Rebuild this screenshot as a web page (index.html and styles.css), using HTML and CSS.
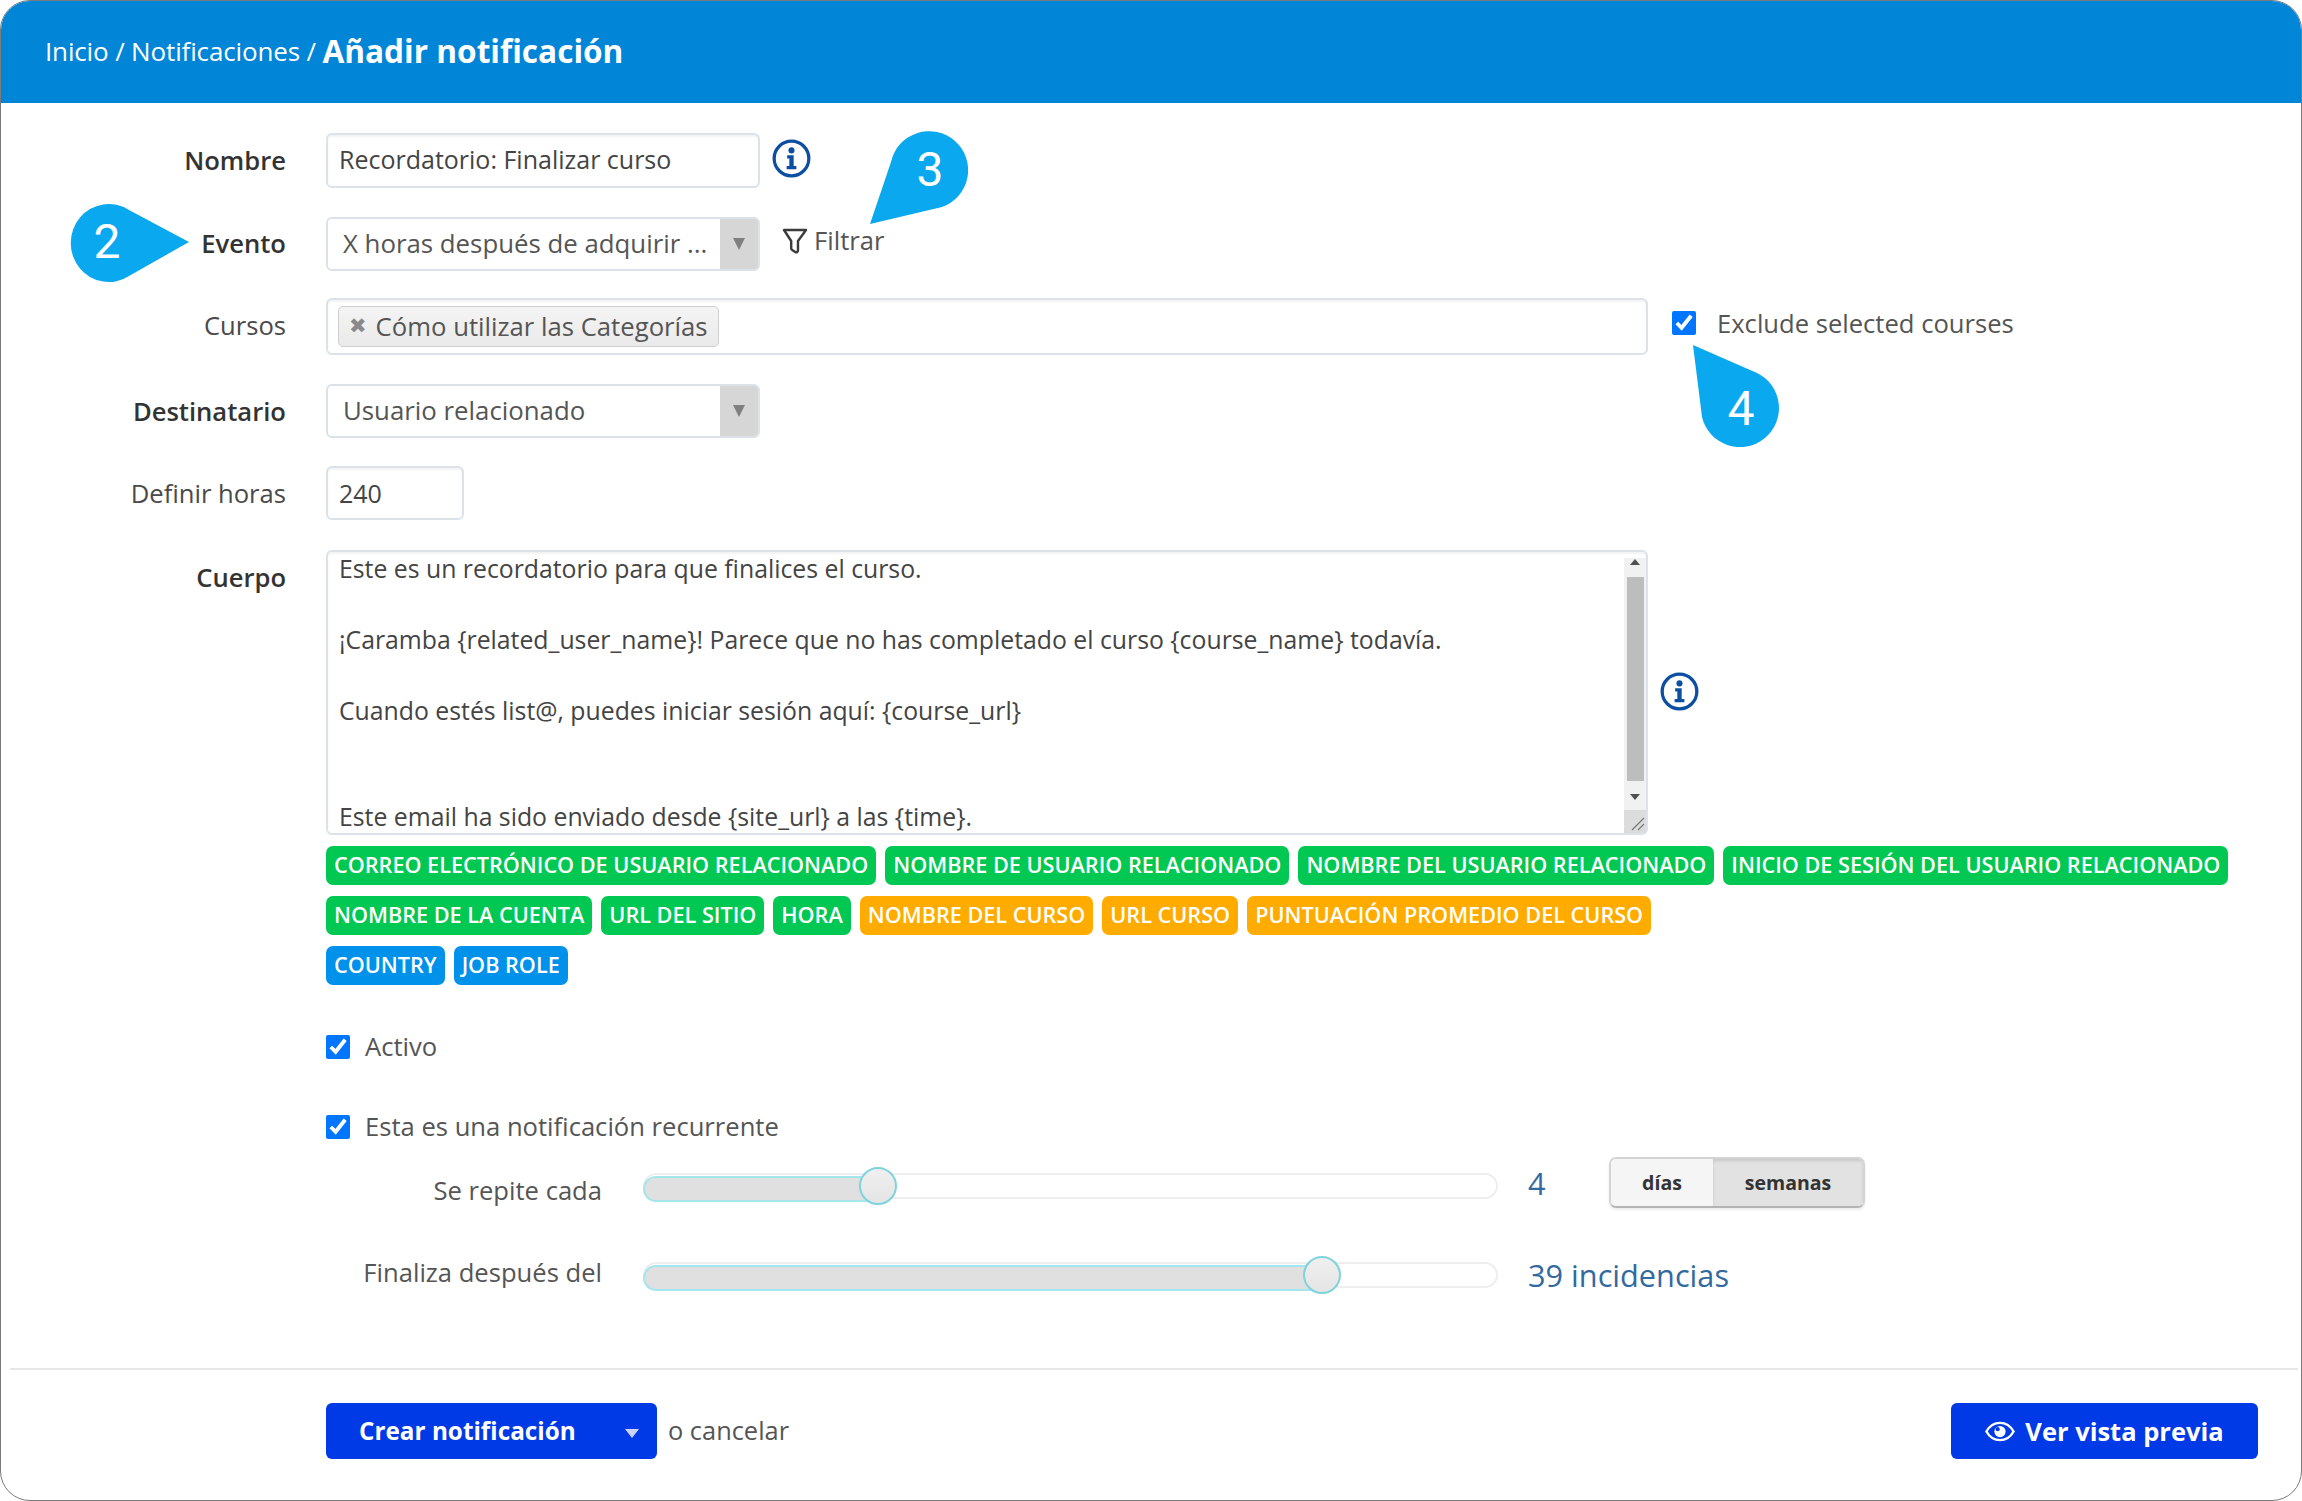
FILE: index.html
```html
<!DOCTYPE html>
<html lang="es">
<head>
<meta charset="utf-8">
<title>Añadir notificación</title>
<link rel="stylesheet" href="styles.css">
</head>
<body>
<div class="card">
  <header class="topbar">
    <span class="crumb">Inicio / Notificaciones / </span><strong class="crumb-current">Añadir notificación</strong>
  </header>

  <main class="form">
    <div class="row row-name">
      <label class="label strong">Nombre</label>
      <div class="input input-name">Recordatorio: Finalizar curso</div>
      <svg class="info info-name" viewBox="0 0 36 36"><circle cx="18" cy="18" r="16" fill="none" stroke="#0b4ea2" stroke-width="3"/><circle cx="18" cy="10.5" r="2.8" fill="#0b4ea2"/><path d="M14 15h6v10h2.5v3h-9v-3H16v-7h-2z" fill="#0b4ea2"/></svg>
    </div>

    <div class="row row-event">
      <label class="label strong">Evento</label>
      <div class="select"><span class="select-text">X horas después de adquirir ...</span><span class="select-arrow"><i class="tri"></i></span></div>
      <div class="filter">
        <svg class="filter-icon" viewBox="0 0 26 26"><path d="M2 2h22l-8 11v9.5a1.8 1.8 0 0 1-2.8 1.5l-3-2a2 2 0 0 1-1-1.6V13z" fill="none" stroke="#3b3b3b" stroke-width="2.4" stroke-linejoin="round"/></svg>
        <span>Filtrar</span>
      </div>
    </div>

    <div class="row row-courses">
      <label class="label">Cursos</label>
      <div class="input multi"><span class="chip"><b class="chip-x">✖</b>Cómo utilizar las Categorías</span></div>
      <label class="check check-exclude"><input type="checkbox" checked><span>Exclude selected courses</span></label>
    </div>

    <div class="row row-target">
      <label class="label strong">Destinatario</label>
      <div class="select"><span class="select-text">Usuario relacionado</span><span class="select-arrow"><i class="tri"></i></span></div>
    </div>

    <div class="row row-hours">
      <label class="label">Definir horas</label>
      <div class="input input-hours">240</div>
    </div>

    <div class="row row-body">
      <label class="label strong">Cuerpo</label>
      <div class="input body-area">
        <div class="body-text">Este es un recordatorio para que finalices el curso.

¡Caramba {related_user_name}! Parece que no has completado el curso {course_name} todavía.

Cuando estés list@, puedes iniciar sesión aquí: {course_url}


Este email ha sido enviado desde {site_url} a las {time}.</div>
        <div class="scrollbar">
          <i class="sb-up"></i>
          <div class="sb-thumb"></div>
          <i class="sb-down"></i>
          <div class="sb-corner"><svg viewBox="0 0 22 21" class="grip"><path d="M8 20 20 8M14 20l6-6" stroke="#777" stroke-width="1.2" fill="none"/></svg></div>
        </div>
      </div>
      <svg class="info info-body" viewBox="0 0 36 36"><circle cx="18" cy="18" r="16" fill="none" stroke="#0b4ea2" stroke-width="3"/><circle cx="18" cy="10.5" r="2.8" fill="#0b4ea2"/><path d="M14 15h6v10h2.5v3h-9v-3H16v-7h-2z" fill="#0b4ea2"/></svg>
    </div>

    <div class="tags">
      <div class="tag-row">
        <span class="tag green">CORREO ELECTRÓNICO DE USUARIO RELACIONADO</span>
        <span class="tag green">NOMBRE DE USUARIO RELACIONADO</span>
        <span class="tag green">NOMBRE DEL USUARIO RELACIONADO</span>
        <span class="tag green">INICIO DE SESIÓN DEL USUARIO RELACIONADO</span>
      </div>
      <div class="tag-row">
        <span class="tag green">NOMBRE DE LA CUENTA</span>
        <span class="tag green">URL DEL SITIO</span>
        <span class="tag green">HORA</span>
        <span class="tag orange">NOMBRE DEL CURSO</span>
        <span class="tag orange">URL CURSO</span>
        <span class="tag orange">PUNTUACIÓN PROMEDIO DEL CURSO</span>
      </div>
      <div class="tag-row">
        <span class="tag blue">COUNTRY</span>
        <span class="tag blue">JOB ROLE</span>
      </div>
    </div>

    <label class="check check-active"><input type="checkbox" checked><span>Activo</span></label>
    <label class="check check-recurring"><input type="checkbox" checked><span>Esta es una notificación recurrente</span></label>

    <div class="slider-row slider-row-a">
      <span class="slider-label">Se repite cada</span>
      <div class="slider">
        <div class="slider-fill" style="width:235px"></div>
        <div class="slider-handle" style="left:214px"></div>
      </div>
      <span class="slider-value">4</span>
      <div class="segmented">
        <span class="seg">días</span>
        <span class="seg seg-on">semanas</span>
      </div>
    </div>

    <div class="slider-row slider-row-b">
      <span class="slider-label">Finaliza después del</span>
      <div class="slider">
        <div class="slider-fill" style="width:677px"></div>
        <div class="slider-handle" style="left:658px"></div>
      </div>
      <span class="slider-value">39 incidencias</span>
    </div>
  </main>

  <footer class="footer">
    <div class="footer-left">
      <div class="split-btn">
        <span class="split-main">Crear notificación</span>
        <span class="split-caret"><i class="tri tri-white"></i></span>
      </div>
      <span class="cancel">o cancelar</span>
    </div>
    <div class="preview-btn">
      <svg class="eye" viewBox="0 0 32 22"><path d="M1.5 11C5 4.8 10 1.8 16 1.8S27 4.8 30.5 11C27 17.2 22 20.2 16 20.2S5 17.2 1.5 11z" fill="none" stroke="#fff" stroke-width="2.6"/><circle cx="16" cy="11" r="6" fill="#fff"/><circle cx="13.5" cy="8.5" r="2.2" fill="#0039e6"/></svg>
      <span>Ver vista previa</span>
    </div>
  </footer>

  <svg class="callout callout-2" viewBox="0 0 120 78"><path d="M119 38 59 72A38 39 0 1 1 59 6z" fill="#0aa8ee"/><text x="37" y="54" class="callout-num">2</text></svg>
  <svg class="callout callout-3" viewBox="0 0 100 100"><path d="M1 94 22 32A39 39 0 1 1 73 77z" fill="#0aa8ee"/><text x="61" y="56" class="callout-num">3</text></svg>
  <svg class="callout callout-4" viewBox="0 0 90 104"><path d="M1 1 65 29A39 39 0 1 1 10 73z" fill="#0aa8ee"/><text x="49" y="81" class="callout-num">4</text></svg>
</div>
</body>
</html>
```
FILE: styles.css
```css
* { box-sizing: border-box; }
html, body { margin: 0; padding: 0; background: #fff; }
body {
  width: 2302px;
  height: 1501px;
  font-family: "Open Sans", "Liberation Sans", sans-serif;
  font-size: 25.6px;
  color: #444;
  overflow: hidden;
}
.card {
  position: relative;
  width: 2302px;
  height: 1501px;
  border: 1.5px solid #7a7a7a;
  border-radius: 30px;
  overflow: hidden;
  background: #fff;
  display: flex;
  flex-direction: column;
}
.topbar {
  height: 102px;
  flex: none;
  background: #0085d7;
  color: #fff;
  display: flex;
  align-items: center;
  padding: 0 0 2px 44px;
  white-space: pre;
}
.crumb { font-size: 26px; letter-spacing: -0.15px; }
.crumb-current { font-size: 31.6px; font-weight: 700; position: relative; top: -1px; }

.form {
  flex: 1;
  padding-top: 30px;
  display: flex;
  flex-direction: column;
}
.row { display: flex; align-items: flex-start; }
.row-event { margin-top: 29px; }
.row-courses { margin-top: 27px; }
.row-target { margin-top: 29px; }
.row-hours { margin-top: 27px; }
.row-body { margin-top: 29px; }

.label {
  width: 285px;
  flex: none;
  margin-right: 40px;
  text-align: right;
  line-height: 55px;
  color: #4a4a4a;
}
.label.strong { font-weight: 600; color: #333; }
.row-event .label { line-height: 53px; }

.input {
  border: 2px solid #dbe2e8;
  border-radius: 6px;
  background: #fff;
  box-shadow: inset 0 2px 2px rgba(0,0,0,0.05);
  color: #444;
  font-size: 25px;
  height: 55px;
  line-height: 49px;
  padding: 0 11px;
  flex: none;
}
.input-name { width: 434px; }
.input-hours { width: 138px; height: 54px; line-height: 50px; }

.info { flex: none; width: 39px; height: 39px; }
.info-name { margin: 6px 0 0 12px; }
.info-body { margin: 122px 0 0 12px; }

.select {
  width: 434px;
  height: 54px;
  flex: none;
  border: 2px solid #dbe2e8;
  border-radius: 6px;
  background: #fff;
  display: flex;
  align-items: stretch;
  overflow: hidden;
}
.select-text { flex: 1; line-height: 48px; padding-left: 15px; white-space: nowrap; color: #555; font-size: 25.8px; }
.select-arrow {
  width: 38px;
  flex: none;
  background: #d6d6d6;
  display: flex;
  align-items: center;
  justify-content: center;
}
.tri {
  display: block;
  width: 0;
  height: 0;
  border-left: 6px solid transparent;
  border-right: 6px solid transparent;
  border-top: 12px solid #808080;
}
.tri-white { border-top-color: #c9d4f7; border-left-width: 7px; border-right-width: 7px; border-top-width: 9px; }

.filter {
  display: flex;
  align-items: center;
  gap: 6px;
  margin: 6px 0 0 22px;
  color: #555;
}
.filter-icon { width: 26px; height: 26px; }

.multi {
  width: 1322px;
  height: 57px;
  display: flex;
  align-items: center;
  padding: 0 10px;
}
.chip {
  height: 41px;
  display: inline-flex;
  align-items: center;
  padding: 0 10px;
  background: linear-gradient(#f4f4f4, #eaeaea);
  border: 1.5px solid #cfcfcf;
  border-radius: 5px;
  color: #555;
  font-size: 25.7px;
  white-space: nowrap;
}
.chip-x { color: #8a8a8a; font-size: 21px; margin-right: 9px; font-weight: 400; font-family: "DejaVu Sans", sans-serif; }

.check { display: flex; align-items: center; color: #555; }
.check input { margin: 0; width: 24px; height: 24px; accent-color: #0075ff; flex: none; }
.check-exclude { margin: 12px 0 0 24px; height: 26px; }
.check-exclude span { margin-left: 21px; }
.check-active { margin: 44px 0 0 325px; }
.check-active span, .check-recurring span { margin-left: 15px; }
.check-recurring { margin: 45px 0 0 325px; }

.body-area {
  width: 1322px;
  height: 285px;
  padding: 0;
  position: relative;
  display: flex;
  line-height: 35.4px;
}
.body-text {
  flex: 1;
  padding: 0 11px;
  margin-top: -1px;
  white-space: pre-wrap;
  font-size: 24.8px;
  color: #444;
}
.scrollbar {
  width: 22px;
  flex: none;
  background: #f1f1f1;
  display: flex;
  flex-direction: column;
  align-items: center;
  margin-top: 6px;
}
.sb-up, .sb-down { display: block; width: 0; height: 0; border-left: 5px solid transparent; border-right: 5px solid transparent; }
.sb-up { border-bottom: 6px solid #505050; margin-top: 1px; }
.sb-thumb { width: 17px; height: 204px; background: #bdbdbd; margin-top: 12px; }
.sb-down { border-top: 6px solid #505050; margin-top: 13px; }
.sb-corner { width: 22px; flex: 1; background: #dcdcdc; margin-top: 10px; }
.grip { display: block; width: 22px; height: 21px; }

.tags { margin: 11px 0 0 325px; display: flex; flex-direction: column; gap: 11px; }
.tag-row { display: flex; gap: 9px; }
.tag {
  height: 39px;
  line-height: 38px;
  padding: 0 8px;
  border-radius: 7px;
  color: #fff;
  font-size: 21.65px;
  font-weight: 600;
  white-space: nowrap;
}
.green { background: #00c853; }
.orange { background: #ffab00; }
.blue { background: #0091ea; }

.slider-row { display: flex; align-items: center; }
.slider-row-a { margin-top: 16px; height: 52px; }
.slider-row-b { margin-top: 37px; height: 52px; }
.slider-label { width: 601px; flex: none; text-align: right; color: #555; }
.slider-row-b .slider-label { position: relative; top: -3px; }
.slider-row-a .slider-label { position: relative; top: 4px; }
.slider {
  position: relative;
  width: 855px;
  height: 26px;
  flex: none;
  margin-left: 41px;
  border: 2px solid #eee;
  border-radius: 13px;
  background: #fff;
}
.slider-fill {
  position: absolute;
  left: -2px;
  top: 1px;
  height: 26px;
  background: #e0e0e0;
  border: 2px solid #a5e5ec;
  border-right: 0;
  border-radius: 13px 0 0 13px;
}
.slider-handle {
  position: absolute;
  top: -8px;
  width: 38px;
  height: 38px;
  border-radius: 50%;
  background: linear-gradient(#f0f0f0, #e4e4e4);
  border: 2px solid #7fd3dc;
}
.slider-value { margin-left: 30px; color: #336a9e; font-size: 30.7px; flex: none; width: 81px; }
.slider-row-a .slider-value { margin-bottom: 6px; }
.slider-row-b .slider-value { width: auto; }
.segmented {
  display: flex;
  height: 51px;
  width: 256px;
  margin-bottom: 8px;
  border-radius: 7px;
  border: 2px solid #d4d4d4;
  border-bottom-color: #b5b5b5;
  overflow: hidden;
  box-shadow: 0 2px 3px rgba(0,0,0,0.08);
  font-weight: 700;
  font-size: 19.5px;
  color: #333;
}
.seg { display: flex; align-items: center; justify-content: center; width: 102px; background: #f5f5f5; }
.seg-on { flex: 1; background: #e2e2e2; box-shadow: inset 0 2px 3px rgba(0,0,0,0.12); }

.footer {
  margin: 0 3px 0 9px;
  border-top: 2px solid #e7e7e7;
  height: 132px;
  flex: none;
  display: flex;
  justify-content: space-between;
  padding: 33px 40px 0 316px;
  align-items: flex-start;
}
.footer-left { display: flex; align-items: center; gap: 11px; }
.split-btn {
  display: flex;
  height: 56px;
  width: 331px;
  background: #0039e6;
  border-radius: 6px;
  color: #fff;
  font-weight: 700;
  font-size: 24.3px;
}
.split-main { width: 280px; flex: none; display: flex; align-items: center; padding: 0 0 2px 33px; border-right: 1px solid #0b35d0; }
.split-caret { flex: 1; display: flex; align-items: center; justify-content: center; padding-top: 4px; }
.cancel { color: #555; font-size: 25.4px; margin-bottom: 2px; }
.preview-btn {
  width: 307px;
  height: 56px;
  background: #0039e6;
  border-radius: 6px;
  color: #fff;
  font-weight: 700;
  font-size: 25.5px;
  display: flex;
  align-items: center;
  justify-content: center;
  gap: 10px;
}
.eye { width: 30px; height: 21px; }

.callout { position: absolute; overflow: visible; }
.callout-num { font-family: Roboto, "Liberation Sans", sans-serif; font-size: 48px; fill: #fff; text-anchor: middle; }
.callout-2 { left: 69px; top: 203px; width: 120px; height: 78px; }
.callout-3 { left: 868px; top: 129px; width: 100px; height: 100px; }
.callout-4 { left: 1691px; top: 343px; width: 90px; height: 104px; }
```
